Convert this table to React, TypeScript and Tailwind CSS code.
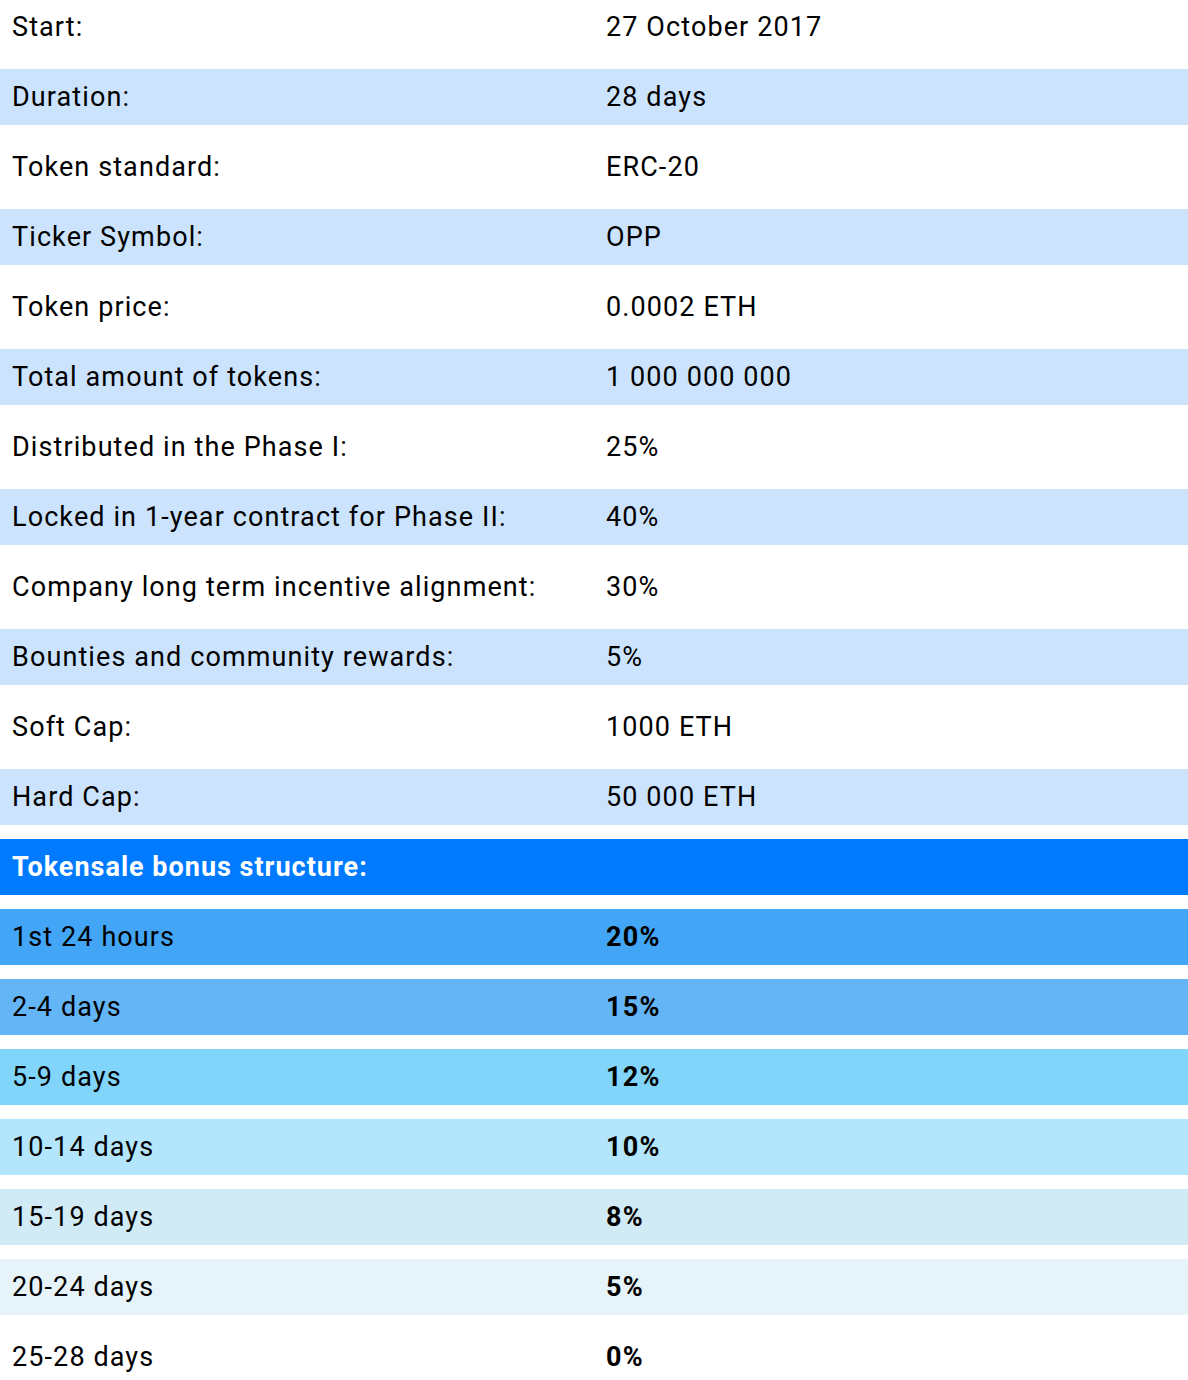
const info: [string, string][] = [
  ["Start:", "27 October 2017"],
  ["Duration:", "28 days"],
  ["Token standard:", "ERC-20"],
  ["Ticker Symbol:", "OPP"],
  ["Token price:", "0.0002 ETH"],
  ["Total amount of tokens:", "1 000 000 000"],
  ["Distributed in the Phase I:", "25%"],
  ["Locked in 1-year contract for Phase II:", "40%"],
  ["Company long term incentive alignment:", "30%"],
  ["Bounties and community rewards:", "5%"],
  ["Soft Cap:", "1000 ETH"],
  ["Hard Cap:", "50 000 ETH"],
];

const bonus: { label: string; value: string; bg: string }[] = [
  { label: "1st 24 hours", value: "20%", bg: "bg-[#42a5f5]" },
  { label: "2-4 days", value: "15%", bg: "bg-[#64b5f6]" },
  { label: "5-9 days", value: "12%", bg: "bg-[#81d4fa]" },
  { label: "10-14 days", value: "10%", bg: "bg-[#b3e5fc]" },
  { label: "15-19 days", value: "8%", bg: "bg-[#d1ebf6]" },
  { label: "20-24 days", value: "5%", bg: "bg-[#e6f4f9]" },
  { label: "25-28 days", value: "0%", bg: "bg-white" },
];

export default function App() {
  return (
    <div className="w-[1188px] h-[1380px] overflow-hidden bg-white text-black font-['Roboto',sans-serif] text-[27px] tracking-[1.1px]">
      <div className="flex flex-col gap-[14px] -mt-px">
        {info.map(([label, value], i) => (
          <div
            key={label}
            className={`grid grid-cols-2 h-14 items-center ${i % 2 === 1 ? "bg-[#cce3fd]" : "bg-white"}`}
          >
            <div className="pl-3">{label}</div>
            <div className="pl-3">{value}</div>
          </div>
        ))}

        <div className="h-14 flex items-center pl-3 bg-[#007bff] text-white font-bold tracking-[1px]">
          Tokensale bonus structure:
        </div>

        {bonus.map((b) => (
          <div key={b.label} className={`grid grid-cols-2 h-14 items-center ${b.bg}`}>
            <div className="pl-3">{b.label}</div>
            <div className="pl-3 font-bold tracking-[1.3px]">{b.value}</div>
          </div>
        ))}
      </div>
    </div>
  );
}
